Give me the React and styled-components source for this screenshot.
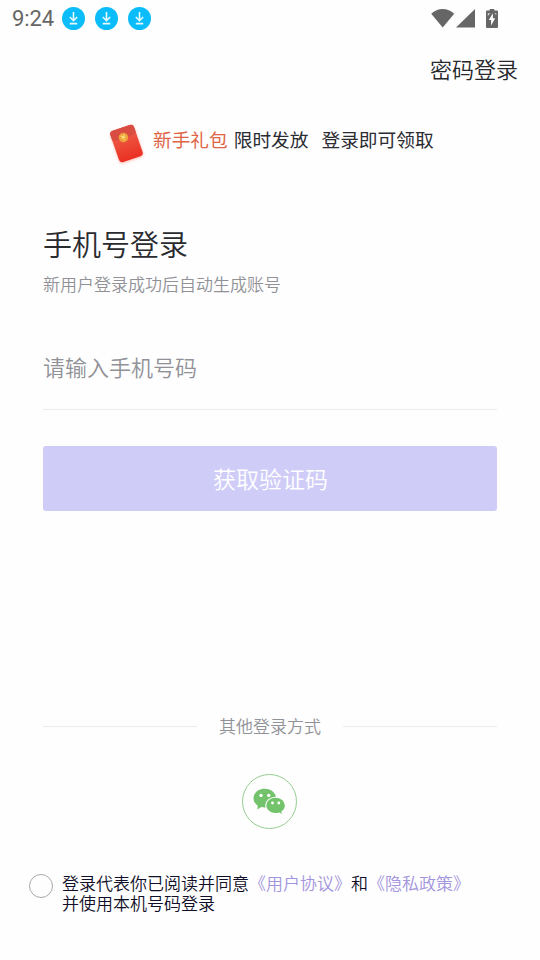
import styled, { createGlobalStyle } from "styled-components"
import { useState } from "react"

const GlobalStyle = createGlobalStyle`
    * {
        box-sizing: border-box;
    }
    body {
        margin: 0;
        background-color: #fefefe;
        font-family: "Noto Sans CJK SC", sans-serif;
        font-weight: 350;
    }
`
const Page = styled.div`
    width: 100%;
    height: 960px;
    overflow: hidden;
    display: flex;
    flex-direction: column;
`
const StatusBar = styled.div`
    height: 37px;
    padding: 0 42px 0 12px;
    display: flex;
    align-items: center;
    justify-content: space-between;
`
const StatusGroup = styled.div`
    display: flex;
    align-items: center;
    gap: ${(props) => props.$gap};
`
const Time = styled.span`
    width: 40px;
    font-family: Roboto, sans-serif;
    font-size: 22px;
    font-weight: 400;
    line-height: 26px;
    letter-spacing: -0.1px;
    color: #666666;
`
const TopBar = styled.div`
    height: 64px;
    padding: 0 22px 2px 0;
    display: flex;
    align-items: center;
    justify-content: flex-end;
`
const TextButton = styled.button`
    border: none;
    padding: 0;
    background: none;
    font-family: inherit;
    font-size: 22px;
    font-weight: 350;
    line-height: 32px;
    color: #26282c;
    cursor: pointer;
`
const Banner = styled.div`
    height: 60px;
    margin-top: 13px;
    padding-left: 104px;
    display: flex;
    align-items: flex-start;
`
const BannerText = styled.div`
    margin: 11px 0 0 1px;
    font-size: 18.7px;
    font-weight: 400;
    line-height: 28px;
    color: #2b2c32;
    white-space: nowrap;
    display: flex;
`
const Phrase = styled.span`
    margin-right: ${(props) => props.$space || "0"};
    color: ${(props) => (props.$highlight ? "#df6547" : "inherit")};
`
const Form = styled.form`
    margin: 0;
    padding: 49px 43px 0;
`
const Title = styled.h1`
    margin: 0;
    font-size: 29px;
    font-weight: 350;
    line-height: 40px;
    color: #2a2b2f;
`
const Description = styled.div`
    margin-top: 8px;
    font-size: 17px;
    line-height: 26px;
    color: #919298;
`
const Input = styled.input`
    display: block;
    width: 100%;
    height: 85px;
    margin-top: 28px;
    padding: 0 0 3px;
    border: none;
    border-bottom: 1px solid #ececee;
    border-radius: 0;
    outline: none;
    background: transparent;
    font-family: inherit;
    font-size: 22px;
    font-weight: 350;
    color: #2a2b2f;
    &::placeholder {
        color: #919298;
        opacity: 1;
    }
`
const Submit = styled.button`
    display: block;
    width: 100%;
    height: 65px;
    margin-top: 36px;
    padding: 0 0 1px 1px;
    border: none;
    border-radius: 3px;
    background-color: #cfcdf8;
    font-family: inherit;
    font-size: 23px;
    font-weight: 350;
    line-height: 64px;
    color: white;
    cursor: pointer;
`
const Divider = styled.div`
    margin: 202px 43px 0;
    height: 26px;
    display: flex;
    align-items: center;
    gap: 22px;
    font-size: 17px;
    line-height: 26px;
    color: #919298;
    &::before,
    &::after {
        content: "";
        flex: 1;
        height: 1px;
        background-color: #ececee;
    }
`
const WechatButton = styled.button`
    width: 55px;
    height: 55px;
    margin: 35px 0 0 242px;
    padding: 0;
    border: 1px solid #94cd90;
    border-radius: 50%;
    background: none;
    display: flex;
    align-items: center;
    justify-content: center;
    cursor: pointer;
`
const Agreement = styled.div`
    margin-top: 44px;
    padding-left: 29px;
    display: flex;
    align-items: flex-start;
`
const Radio = styled.button`
    width: 24px;
    height: 24px;
    margin: 1px 9px 0 0;
    padding: 0;
    border: 1px solid #a9a9ab;
    border-radius: 50%;
    background: ${(props) => (props.$checked ? "#9f90dc" : "none")};
    cursor: pointer;
`
const AgreementText = styled.div`
    font-size: 17px;
    line-height: 20px;
    color: #100e28;
    white-space: nowrap;
`
const Link = styled.span`
    color: #a294dd;
    cursor: pointer;
`

const DownloadIcon = () => (
    <svg width="23" height="23" viewBox="0 0 23 23" fill="none">
        <circle cx="11.5" cy="11.5" r="11.5" fill="#0bbcfa" />
        <path d="M11.5 5v8.3M7.8 10l3.7 3.7 3.7-3.7M7.8 16.6h7.4" stroke="#e6faff" strokeWidth="1.6" />
    </svg>
)

const WifiIcon = () => (
    <svg width="24" height="20" viewBox="0 0 24 20" fill="#666666">
        <path d="M.2 4.8C3.300 1.700 7.500.1 11.700.1s8.400 1.600 11.500 4.700L11.700 18.500z" />
    </svg>
)

const SignalIcon = () => (
    <svg width="19" height="20" viewBox="0 0 19 20" fill="#666666">
        <path d="M19 0v18.500H0z" />
    </svg>
)

const BatteryIcon = () => (
    <svg width="12" height="20" viewBox="0 0 12 20">
        <path d="M3.700 0h4.600v1.500H11a1 1 0 0 1 1 1v15.500a1 1 0 0 1-1 1H1a1 1 0 0 1-1-1V2.500a1 1 0 0 1 1-1h2.700z" fill="#666666" />
        <path d="M6.900 4.200v5h2.300l-4.100 7.400v-5.500H2.800z" fill="white" />
        <path d="M1.800 4.300h2.400l-2.400 2.600zM8.600 4.300h1.600v2z" fill="#dddddd" />
    </svg>
)

const EnvelopeIcon = () => (
    <svg width="48" height="56" viewBox="0 0 48 56">
        <defs>
            <linearGradient id="packet" x1="0" y1="0" x2="0" y2="1">
                <stop offset="0" stopColor="#ee6350" />
                <stop offset="1" stopColor="#ea3022" />
            </linearGradient>
            <filter id="glow" x="-40%" y="-40%" width="180%" height="180%">
                <feGaussianBlur stdDeviation="1.5" />
            </filter>
        </defs>
        <g transform="rotate(-19 22.500 29.500)">
            <rect x="10" y="14" width="25" height="33" rx="3.500" fill="#ff8c7e" opacity=".6" filter="url(#glow)" />
            <rect x="10" y="13" width="25" height="33" rx="3.500" fill="url(#packet)" />
            <path d="M10 22v-5.500a3.500 3.500 0 0 1 3.500-3.500h18a3.500 3.500 0 0 1 3.500 3.500V22c-7.500 3.500-17.500 3.500-25 0z" fill="#d84c42" />
            <circle cx="21.600" cy="22.800" r="4.800" fill="#eda038" />
            <path d="M19.600 20.300l2 2.300 2-2.300M19.400 23.100h4.400M21.600 22.600v3.200" fill="none" stroke="#fbe083" strokeWidth="1.100" />
        </g>
    </svg>
)

const WechatIcon = () => (
    <svg width="34" height="28" viewBox="0 0 34 28">
        <path
            d="M11.800.8C5.500.8.500 4.900.500 10.200c0 3.100 1.700 5.800 4.300 7.500l-.5 3.900 4-2.500c1.100.3 2.300.5 3.500.5 6.200 0 11.300-4.200 11.300-9.400S18 .8 11.800.8z"
            fill="#72c36c"
        />
        <path
            d="M22.500 9.200c-5.400 0-9.800 3.600-9.800 8.200s4.400 8.200 9.800 8.200c1.300 0 2.600-.2 3.700-.6l3.400 2-.7-3.300c2.100-1.500 3.500-3.800 3.500-6.300 0-4.600-4.500-8.200-9.900-8.200z"
            fill="#72c36c"
            stroke="#fefefe"
            strokeWidth="1.100"
        />
        <g fill="#fefefe">
            <circle cx="8" cy="7.400" r="1.700" />
            <circle cx="15.700" cy="7.400" r="1.700" />
            <circle cx="19.500" cy="15" r="1.400" />
            <circle cx="25.800" cy="15" r="1.400" />
        </g>
    </svg>
)

function App() {
    const [phone, setPhone] = useState("")
    const [checked, setChecked] = useState(false)

    return (
        <>
            <GlobalStyle />
            <Page>
                <StatusBar>
                    <StatusGroup $gap="10px">
                        <Time>9:24</Time>
                        <DownloadIcon />
                        <DownloadIcon />
                        <DownloadIcon />
                    </StatusGroup>
                    <StatusGroup $gap="11px">
                        <StatusGroup $gap="1px">
                            <WifiIcon />
                            <SignalIcon />
                        </StatusGroup>
                        <BatteryIcon />
                    </StatusGroup>
                </StatusBar>
                <TopBar>
                    <TextButton>密码登录</TextButton>
                </TopBar>
                <Banner>
                    <EnvelopeIcon />
                    <BannerText>
                        <Phrase $highlight $space="6px">新手礼包</Phrase>
                        <Phrase $space="13px">限时发放</Phrase>
                        <Phrase>登录即可领取</Phrase>
                    </BannerText>
                </Banner>
                <Form onSubmit={(e) => e.preventDefault()}>
                    <Title>手机号登录</Title>
                    <Description>新用户登录成功后自动生成账号</Description>
                    <Input
                        type="tel"
                        placeholder="请输入手机号码"
                        value={phone}
                        onChange={(e) => setPhone(e.target.value)}
                    />
                    <Submit>获取验证码</Submit>
                </Form>
                <Divider>其他登录方式</Divider>
                <WechatButton aria-label="微信登录">
                    <WechatIcon />
                </WechatButton>
                <Agreement>
                    <Radio $checked={checked} onClick={() => setChecked(!checked)} aria-label="同意协议" />
                    <AgreementText>
                        登录代表你已阅读并同意<Link>《用户协议》</Link>和<Link>《隐私政策》</Link>
                        <br />
                        并使用本机号码登录
                    </AgreementText>
                </Agreement>
            </Page>
        </>
    )
}

export default App
